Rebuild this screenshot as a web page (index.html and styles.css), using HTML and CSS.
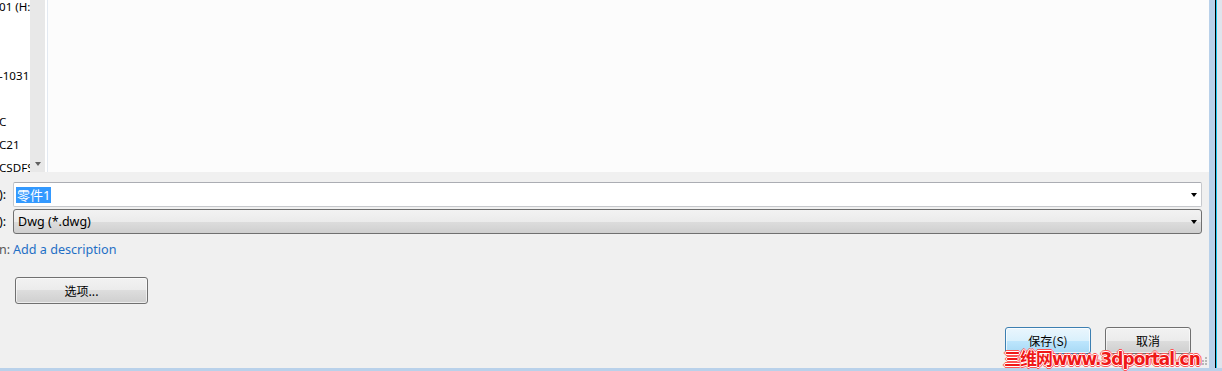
FILE: index.html
```html
<!DOCTYPE html>
<html lang="zh-CN">
<head>
<meta charset="utf-8">
<title>另存为</title>
<link rel="stylesheet" href="styles.css">
</head>
<body>
<div class="screen">
  <div class="main">
    <div class="dialog">
      <div class="browser">
        <div class="nav">
          <ul class="nav-list">
            <li>01 (H:</li>
            <li></li>
            <li></li>
            <li>-1031</li>
            <li></li>
            <li>C</li>
            <li>C21</li>
            <li>CSDFS</li>
          </ul>
        </div>
        <div class="vscroll"><span class="scroll-arrow"></span></div>
        <div class="divider"></div>
        <div class="files"></div>
      </div>
      <div class="form">
        <div class="row">
          <span class="label">):</span>
          <div class="field edit">
            <span class="sel">零件1</span>
            <span class="arrow"></span>
          </div>
        </div>
        <div class="row">
          <span class="label">):</span>
          <div class="field combo">
            <span class="combo-text">Dwg (*.dwg)</span>
            <span class="arrow"></span>
          </div>
        </div>
        <div class="row desc">
          <span class="label muted">n:</span>
          <a class="link">Add a description</a>
        </div>
        <div class="options-row">
          <button class="btn options">选项...</button>
        </div>
        <div class="actions">
          <button class="btn default">保存(S)</button>
          <button class="btn">取消</button>
        </div>
        <div class="watermark">三维网www.3dportal.cn</div>
        <div class="grip">
          <i></i><i></i><i></i><i></i><i></i><i></i>
        </div>
      </div>
    </div>
    <div class="rframe">
      <div class="rf-blue"></div>
      <div class="rf-black"></div>
      <div class="rf-cyan"></div>
      <div class="rf-gray"></div>
    </div>
  </div>
  <div class="bframe"></div>
</div>
</body>
</html>
```
FILE: styles.css
```css
* { box-sizing: border-box; }
html, body { margin: 0; padding: 0; }
body {
  width: 1222px;
  height: 371px;
  overflow: hidden;
  background: #f0f0f0;
  font-family: "Noto Sans", "Noto Sans CJK SC", sans-serif;
  font-size: 12px;
  color: #000;
}
.screen { width: 1222px; height: 371px; display: flex; flex-direction: column; }
.main { flex: 1; display: flex; min-height: 0; }
.dialog { width: 1209px; display: flex; flex-direction: column; background: #f0f0f0; position: relative; }

.browser { height: 172px; display: flex; }
.nav { width: 30px; background: #fff; overflow: hidden; }
.nav-list { list-style: none; margin: -5px 0 0 -1px; padding: 0; white-space: nowrap; }
.nav-list li { height: 23px; line-height: 23px; font-size: 11.6px; }
.vscroll { width: 15px; background: #e8e8e8; position: relative; }
.scroll-arrow {
  position: absolute; left: 5px; top: 162px;
  width: 0; height: 0;
  border-left: 3.5px solid transparent; border-right: 3.5px solid transparent;
  border-top: 4px solid #606060;
}
.divider { width: 3px; background: #fff; border-right: 1px solid #e3e9f1; }
.files { flex: 1; background: #fcfcfc; }

.form { flex: 1; padding-top: 10px; display: flex; flex-direction: column; }
.row { display: flex; align-items: center; height: 25px; margin-bottom: 2px; }
.label { width: 14px; font-size: 12.5px; margin-left: -1px; }
.muted { color: #555; }
.field { width: 1189px; height: 25px; position: relative; display: flex; align-items: center; }
.edit { background: #fff; border: 1px solid #c6c8cc; border-top-color: #abadb3; border-radius: 2px; padding-left: 2px; }
.sel { background: #3399ff; color: #fff; padding: 0 1px; line-height: 16px; font-size: 13px; }
.combo {
  border: 1px solid #707070; border-radius: 3px; padding-left: 4px;
  background: linear-gradient(to bottom, #f2f2f2 0%, #ebebeb 50%, #dddddd 50%, #cfcfcf 100%);
}
.combo-text { font-size: 12.5px; }
.arrow {
  position: absolute; right: 4px; top: 10px;
  width: 0; height: 0;
  border-left: 3.5px solid transparent; border-right: 3.5px solid transparent;
  border-top: 4px solid #000;
}
.desc { margin-top: 3px; height: 20px; margin-bottom: 0; }
.link { color: #1f6fc5; font-size: 12.6px; }

.options-row { margin-top: 18px; padding-left: 15px; }
.btn {
  font-family: "Noto Sans CJK SC", "Noto Sans", sans-serif;
  font-size: 12px; color: #000;
  height: 27px; width: 86px; padding: 0;
  border: 1px solid #707070; border-radius: 3px;
  background: linear-gradient(to bottom, #f2f2f2 0%, #ebebeb 50%, #dddddd 50%, #cfcfcf 100%);
  box-shadow: inset 0 0 0 1px rgba(255,255,255,0.6);
}
.options { width: 133px; }
.actions { margin-top: 23px; display: flex; justify-content: flex-end; gap: 14px; padding-right: 18px; }
.btn.default {
  border-color: #3c7fb1;
  background: linear-gradient(to bottom, #eaf6fd 0%, #d9f0fc 50%, #bee6fd 50%, #a7d9f5 100%);
  box-shadow: inset 0 0 0 1px rgba(255,255,255,0.7);
}

.watermark {
  position: absolute; left: 1004px; top: 350px;
  font-family: "DejaVu Sans", "Noto Sans CJK SC", sans-serif;
  font-weight: bold; font-size: 17px; line-height: 18px;
  letter-spacing: -1px;
  color: #f01818;
  text-shadow:
    -1px 0 #fff, 1px 0 #fff, 0 -1px #fff, 0 1px #fff,
    -2px 0 #f55, 2px 0 #f55, 0 -2px #f55, 0 2px #f55,
    -1px -1px #f77, 1px 1px #f77, -1px 1px #f77, 1px -1px #f77;
  white-space: nowrap;
}
.grip { position: absolute; right: 2px; bottom: 3px; width: 10px; height: 10px; }
.grip i { position: absolute; width: 2px; height: 2px; background: #b8b8b8; }
.grip i:nth-child(1) { right: 0; bottom: 0; }
.grip i:nth-child(2) { right: 3px; bottom: 0; }
.grip i:nth-child(3) { right: 6px; bottom: 0; }
.grip i:nth-child(4) { right: 0; bottom: 3px; }
.grip i:nth-child(5) { right: 3px; bottom: 3px; }
.grip i:nth-child(6) { right: 0; bottom: 6px; }

.rframe { width: 13px; display: flex; }
.rf-blue { width: 6px; background: #b9d1ea; }
.rf-black { width: 1px; background: #000; }
.rf-cyan { width: 1px; background: #1ec8f0; }
.rf-gray { flex: 1; background: #dfe4ec; }
.bframe { height: 3px; background: #b9d1ea; }
```
